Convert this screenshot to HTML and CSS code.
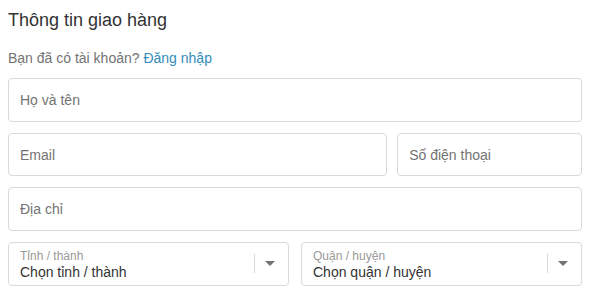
FILE: index.html
```html
<!doctype html>
<html lang="vi">
<head>
	<meta charset="utf-8">
	<meta name="viewport" content="width=device-width, initial-scale=1.0">
	<title>Thông tin giao hàng</title>
	<link rel="stylesheet" href="styles.css">
</head>
<body>
	<div class="section">
		<h2 class="section-title">Thông tin giao hàng</h2>
		<p class="section-text">Bạn đã có tài khoản? <a href="#" class="link">Đăng nhập</a></p>

		<div class="fields">
			<div class="field field-full">
				<input class="field-input" type="text" placeholder="Họ và tên">
			</div>
			<div class="field field-two-thirds">
				<input class="field-input" type="email" placeholder="Email">
			</div>
			<div class="field field-third">
				<input class="field-input" type="tel" placeholder="Số điện thoại">
			</div>
			<div class="field field-full">
				<input class="field-input" type="text" placeholder="Địa chỉ">
			</div>
			<div class="field field-half">
				<div class="select">
					<div class="select-body">
						<span class="select-label">Tỉnh / thành</span>
						<span class="select-value">Chọn tỉnh / thành</span>
					</div>
					<span class="select-arrow"></span>
				</div>
			</div>
			<div class="field field-half">
				<div class="select">
					<div class="select-body">
						<span class="select-label">Quận / huyện</span>
						<span class="select-value">Chọn quận / huyện</span>
					</div>
					<span class="select-arrow"></span>
				</div>
			</div>
		</div>
	</div>
</body>
</html>
```

FILE: styles.css
```css
body {
	margin: 0;
	padding: 8px 12px 0 8px;
	font-family: "Liberation Sans", Arial, sans-serif;
	color: #333;
	background: #fff;
}

.section-title {
	margin: 0;
	font-size: 18px;
	font-weight: normal;
	line-height: 24px;
	color: #333;
}

.section-text {
	margin: 16px 0 0;
	font-size: 14px;
	line-height: 20px;
	color: #737373;
}

.link {
	color: #338dbc;
	text-decoration: none;
}

.fields {
	display: flex;
	flex-wrap: wrap;
	margin: 10px -6px 0;
	row-gap: 11px;
}

.field {
	box-sizing: border-box;
	padding: 0 6px;
}
.field-full { width: 100%; }
.field-two-thirds { width: 66.6667%; }
.field-third { width: 33.3333%; padding-left: 4.5px; }
.field-half { width: 50%; }

.field-input {
	display: block;
	box-sizing: border-box;
	width: 100%;
	height: 43.7px;
	margin: 0;
	padding: 0 11px;
	border: 1px solid #d9d9d9;
	border-radius: 4px;
	font-family: inherit;
	font-size: 14px;
	color: #333;
	background: #fff;
	outline: none;
}
.field-input::placeholder {
	color: #737373;
	opacity: 1;
}

.select {
	display: flex;
	align-items: center;
	box-sizing: border-box;
	height: 43.7px;
	border: 1px solid #d9d9d9;
	border-radius: 4px;
	background: #fff;
}

.select-body {
	flex: 1;
	display: flex;
	flex-direction: column;
	padding: 0 11px;
	min-width: 0;
}

.select-label {
	font-size: 12px;
	line-height: 14px;
	color: #999;
	margin-top: 2px;
}

.select-value {
	font-size: 14px;
	line-height: 18px;
	color: #333;
}

.select-arrow {
	position: relative;
	width: 32px;
	height: 19px;
	margin-right: 1px;
	border-left: 1px solid #d9d9d9;
}
.select-arrow::after {
	content: "";
	position: absolute;
	left: 10px;
	top: 7px;
	border-left: 5px solid transparent;
	border-right: 5px solid transparent;
	border-top: 5px solid #737373;
}
```
